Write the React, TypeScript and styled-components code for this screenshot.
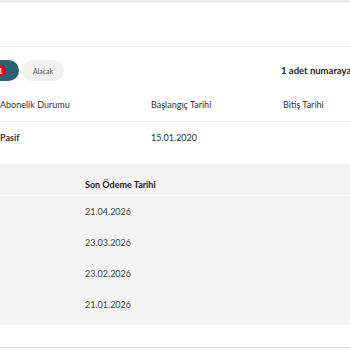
import styled, { createGlobalStyle } from "styled-components";

const GlobalStyle = createGlobalStyle`
    body {
        margin: 0;
        background: #ffffff;
        font-family: Lato, "Open Sans", sans-serif;
        color: #333333;
    }
`;

const Page = styled.div`
    width: 350px;
    height: 350px;
    overflow: hidden;
    background: #ffffff;
`;

const TopBar = styled.div`
    height: 3px;
    background: #ececec;
`;

const HeaderArea = styled.div`
    height: 43px;
    border-bottom: 1px solid #f1f1f1;
`;

const Grid = styled.div`
    display: grid;
    grid-template-columns: 151px 132px 1fr;
    width: 450px;
`;

const FilterRow = styled(Grid)`
    padding-top: 13px;
    align-items: center;
`;

const Chips = styled.div`
    display: flex;
    align-items: center;
    gap: 3px;
    grid-column: 1 / 3;
`;

const Chip = styled.div<{ $active?: boolean }>`
    flex: none;
    box-sizing: border-box;
    height: 21px;
    border-radius: 11px;
    display: flex;
    align-items: center;
    gap: 5px;
    font-size: 7px;
    background: ${p => (p.$active ? "#2b6173" : "#f1f1f1")};
    color: ${p => (p.$active ? "#ffffff" : "#555555")};
    width: ${p => (p.$active ? "50px" : "42px")};
    margin-left: ${p => (p.$active ? "-31px" : "0")};
    padding-right: ${p => (p.$active ? "13px" : "0")};
    justify-content: ${p => (p.$active ? "flex-end" : "center")};
`;

const Badge = styled.span`
    flex: none;
    width: 11px;
    height: 11px;
    border-radius: 50%;
    background: #e60000;
    color: #ffffff;
    font-size: 7px;
    font-weight: 700;
    display: flex;
    align-items: center;
    justify-content: center;
`;

const Summary = styled.div`
    font-size: 9.5px;
    font-weight: 700;
    color: #222222;
    white-space: nowrap;
    margin-left: -2px;
`;

const HeadRow = styled(Grid)`
    padding: 18px 0 10px;
    line-height: 12px;
    font-size: 9px;
    border-bottom: 1px solid #f1f1f1;
`;

const DataRow = styled(Grid)`
    padding: 10px 0 20px;
    line-height: 12px;
    font-size: 9px;
`;

const Cell = styled.div<{ $bold?: boolean }>`
    font-weight: ${p => (p.$bold ? 700 : 400)};
    white-space: nowrap;
`;

const Panel = styled.div`
    background: #f4f4f4;
    padding-bottom: 5px;
`;

const PanelHead = styled.div`
    padding: 14px 0 4px 85px;
    line-height: 13px;
    font-size: 9px;
    font-weight: 700;
    color: #222222;
    border-bottom: 1px solid #fbfbfb;
`;

const PanelRow = styled.div`
    padding-left: 85px;
    height: 31px;
    line-height: 31px;
    font-size: 9px;
    color: #444444;
`;

const Footer = styled.div`
    height: 22px;
    border-bottom: 1px solid #e2e2e2;
`;

const dates = ["21.04.2026", "23.03.2026", "23.02.2026", "21.01.2026"];

export default function App() {
    return (
        <Page>
            <GlobalStyle />
            <TopBar />
            <HeaderArea />
            <FilterRow>
                <Chips>
                    <Chip $active>
                        Borç
                        <Badge>1</Badge>
                    </Chip>
                    <Chip>Alacak</Chip>
                </Chips>
                <Summary>1 adet numaraya ait abonelik bulunmaktadır</Summary>
            </FilterRow>
            <HeadRow>
                <Cell>Abonelik Durumu</Cell>
                <Cell>Başlangıç Tarihi</Cell>
                <Cell>Bitiş Tarihi</Cell>
            </HeadRow>
            <DataRow>
                <Cell $bold>Pasif</Cell>
                <Cell>15.01.2020</Cell>
                <Cell />
            </DataRow>
            <Panel>
                <PanelHead>Son Ödeme Tarihi</PanelHead>
                {dates.map(d => (
                    <PanelRow key={d}>{d}</PanelRow>
                ))}
            </Panel>
            <Footer />
        </Page>
    );
}
